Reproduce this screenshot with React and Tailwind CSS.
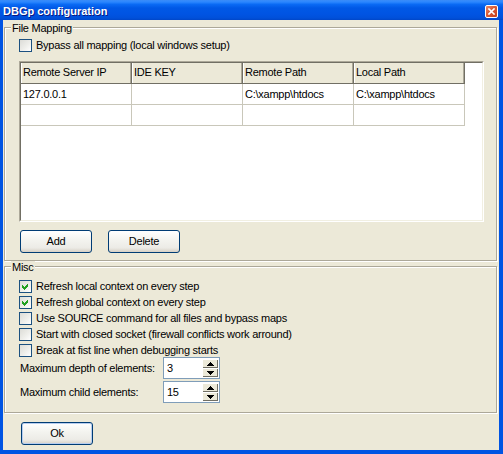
import React from 'react';

const columns = ['Remote Server IP', 'IDE KEY', 'Remote Path', 'Local Path'];
const rows = [
  ['127.0.0.1', '', 'C:\\xampp\\htdocs', 'C:\\xampp\\htdocs'],
  ['', '', '', ''],
];

function CheckBox({ checked, label }) {
  return (
    <div className="flex items-center h-[13px]">
      <span className="w-[13px] h-[13px] shrink-0 border border-[#1C5180] bg-[linear-gradient(135deg,#DCDCD7_0%,#EEEEEA_55%,#FFFFFF_100%)]">
        {checked && (
          <svg width="11" height="11" viewBox="0 0 11 11" shapeRendering="crispEdges">
            <polygon points="2,4 4,6 8,2 8,5 4,9 2,7" fill="#21A121" />
          </svg>
        )}
      </span>
      <span className="ml-[4px] leading-[13px] whitespace-nowrap">{label}</span>
    </div>
  );
}

function XpButton({ children, isDefault }) {
  return (
    <button
      className={`w-[72px] h-[23px] rounded-[3px] border border-[#003C74] bg-[linear-gradient(to_bottom,#FFFFFF_0%,#F4F4F0_40%,#ECEBE6_80%,#D6D0C5_100%)] text-black leading-[21px] ${
        isDefault ? 'shadow-[inset_0_0_0_1px_#B7CDEF]' : ''
      }`}
    >
      {children}
    </button>
  );
}

function Spin({ value }) {
  return (
    <div className="w-[57px] h-[22px] border border-[#7F9DB9] bg-white flex">
      <span className="flex-1 pl-[3px] leading-[20px]">{value}</span>
      <div className="w-[16px] my-[1px] mr-[1px] flex flex-col">
        <div className="h-[9px] flex items-center justify-center bg-[#ECE9D8] shadow-[inset_1px_1px_0_#fff,inset_-1px_-1px_0_#716F64]">
          <svg width="7" height="4" viewBox="0 0 7 4" shapeRendering="crispEdges">
            <polygon points="3.5,0 7,4 0,4" fill="#000" />
          </svg>
        </div>
        <div className="h-[9px] flex items-center justify-center bg-[#ECE9D8] shadow-[inset_1px_1px_0_#fff,inset_-1px_-1px_0_#716F64]">
          <svg width="7" height="4" viewBox="0 0 7 4" shapeRendering="crispEdges">
            <polygon points="0,0 7,0 3.5,4" fill="#000" />
          </svg>
        </div>
      </div>
    </div>
  );
}

function Group({ title, className, children }) {
  return (
    <div className={`relative ml-px mr-[2px] border border-[#ACA899] shadow-[inset_1px_1px_0_#fff,1px_1px_0_#fff] ${className}`}>
      <span className="absolute -top-[6px] left-[6px] px-px bg-[#ECE9D8] leading-[13px]">{title}</span>
      {children}
    </div>
  );
}

export default function App() {
  return (
    <div className="w-[503px] h-[454px] flex flex-col bg-[#0054E3] font-['Liberation_Sans',Arial,sans-serif] text-[11px] tracking-[-0.25px] text-black select-none">
      {/* caption */}
      <div className="h-[20px] flex items-center justify-between pl-[3px] pr-[5px] bg-[linear-gradient(to_bottom,#3A8CF8_0%,#2B87FF_10%,#0A6AF4_22%,#0058E6_40%,#0054E3_70%,#0050DA_90%,#0046C8_100%)]">
        <span className="text-white font-bold tracking-normal leading-[13px] pt-[2px] [text-shadow:1px_1px_#0A1883]">
          DBGp configuration
        </span>
        <span className="w-[13px] h-[13px] mt-[2px] rounded-[2px] border border-white bg-[linear-gradient(135deg,#E8886A_0%,#D95B36_45%,#C3401E_100%)] flex items-center justify-center">
          <svg width="7" height="7" viewBox="0 0 7 7">
            <path d="M1 1 L6 6 M6 1 L1 6" stroke="#fff" strokeWidth="1.6" strokeLinecap="square" />
          </svg>
        </span>
      </div>

      {/* client */}
      <div className="flex-1 ml-[3px] mr-[4px] mb-[4px] bg-[#ECE9D8] flex flex-col">
        <Group title="File Mapping" className="mt-[7px] h-[234px] pl-[14px] pt-[11px]">
          <CheckBox label="Bypass all mapping (local windows setup)" />

          <div className="mt-[9px] w-[465px] h-[161px] border border-t-[#ACA899] border-l-[#ACA899] border-b-white border-r-white">
            <div className="h-full border border-t-[#716F64] border-l-[#716F64] border-b-[#F1EFE2] border-r-[#F1EFE2] bg-white">
              <div className="flex h-[21px]">
                {columns.map((c) => (
                  <div
                    key={c}
                    className="w-[111px] border-r border-b border-[#716F64] bg-[#ECE9D8] shadow-[inset_1px_0_0_#fff,inset_-1px_0_0_#ACA899] pl-[2px] leading-[19px] whitespace-nowrap"
                  >
                    {c}
                  </div>
                ))}
              </div>
              {rows.map((r, i) => (
                <div key={i} className="flex h-[21px]">
                  {r.map((v, j) => (
                    <div key={j} className="w-[111px] border-r border-b border-[#C9C7BA] pl-[2px] leading-[20px] whitespace-nowrap">
                      {v}
                    </div>
                  ))}
                </div>
              ))}
            </div>
          </div>

          <div className="mt-[8px] ml-px flex gap-[16px]">
            <XpButton>Add</XpButton>
            <XpButton>Delete</XpButton>
          </div>
        </Group>

        <Group title="Misc" className="mt-[5px] h-[147px] pl-[14px] pt-[13px]">
          <div className="flex flex-col gap-[3px]">
            <CheckBox checked label="Refresh local context on every step" />
            <CheckBox checked label="Refresh global context on every step" />
            <CheckBox label="Use SOURCE command for all files and bypass maps" />
            <CheckBox label="Start with closed socket (firewall conflicts work arround)" />
            <CheckBox label="Break at fist line when debugging starts" />
          </div>
          <div className="flex flex-col gap-[2px] ml-px">
            <div className="flex items-center">
              <span className="w-[143px]">Maximum depth of elements:</span>
              <Spin value="3" />
            </div>
            <div className="flex items-center">
              <span className="w-[143px]">Maximum child elements:</span>
              <Spin value="15" />
            </div>
          </div>
        </Group>

        <div className="mt-[9px] ml-[18px]">
          <XpButton isDefault>Ok</XpButton>
        </div>
      </div>
    </div>
  );
}
